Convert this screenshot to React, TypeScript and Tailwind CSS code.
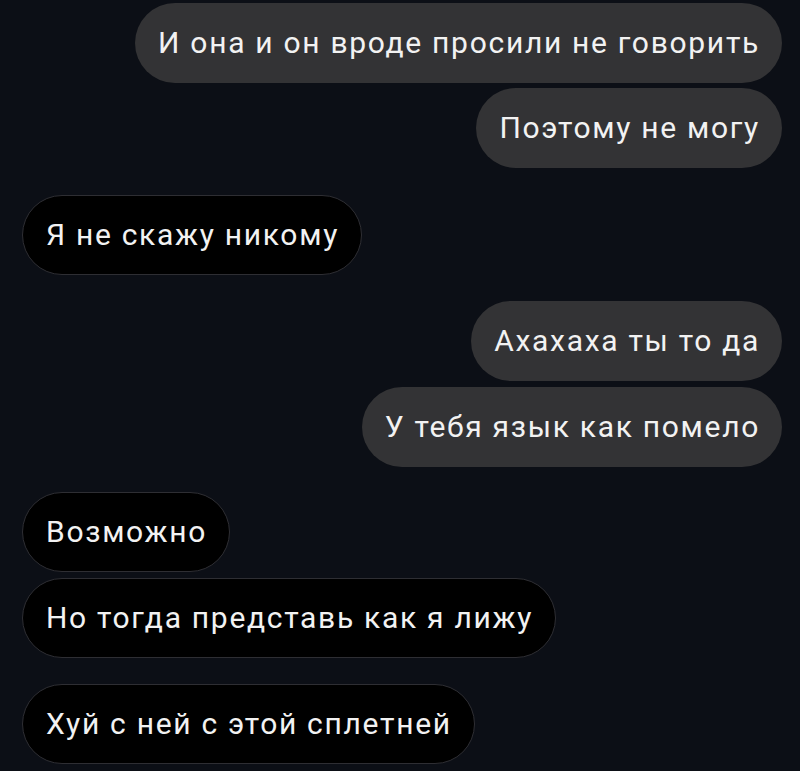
type Msg = { text: string; mine: boolean; gap: string };

const messages: Msg[] = [
  { text: "И она и он вроде просили не говорить", mine: true, gap: "mt-[3px]" },
  { text: "Поэтому не могу", mine: true, gap: "mt-[5px]" },
  { text: "Я не скажу никому", mine: false, gap: "mt-[27px]" },
  { text: "Ахахаха ты то да", mine: true, gap: "mt-[26px]" },
  { text: "У тебя язык как помело", mine: true, gap: "mt-[6px]" },
  { text: "Возможно", mine: false, gap: "mt-[25px]" },
  { text: "Но тогда представь как я лижу", mine: false, gap: "mt-[6px]" },
  { text: "Хуй с ней с этой сплетней", mine: false, gap: "mt-[26px]" },
];

const Bubble = ({ text, mine, gap }: Msg) => {
  return (
    <div className={`flex ${mine ? "justify-end" : "justify-start"} ${gap}`}>
      <div
        className={`flex h-[80px] items-center rounded-full pl-[23px] pr-[22px] text-[30px] leading-none tracking-[1.7px] text-[#f2f2f2] ${
          mine ? "bg-[#333335]" : "border-[1.5px] border-[#2e2e33] bg-black"
        }`}
      >
        {text}
      </div>
    </div>
  );
};

export default function App() {
  return (
    <div
      className="h-[771px] w-[800px] overflow-hidden bg-[#0c0f16] pl-[22px] pr-[18px]"
      style={{ fontFamily: "Roboto, 'Noto Sans', sans-serif" }}
    >
      {messages.map((m, i) => (
        <Bubble key={i} {...m} />
      ))}
    </div>
  );
}
